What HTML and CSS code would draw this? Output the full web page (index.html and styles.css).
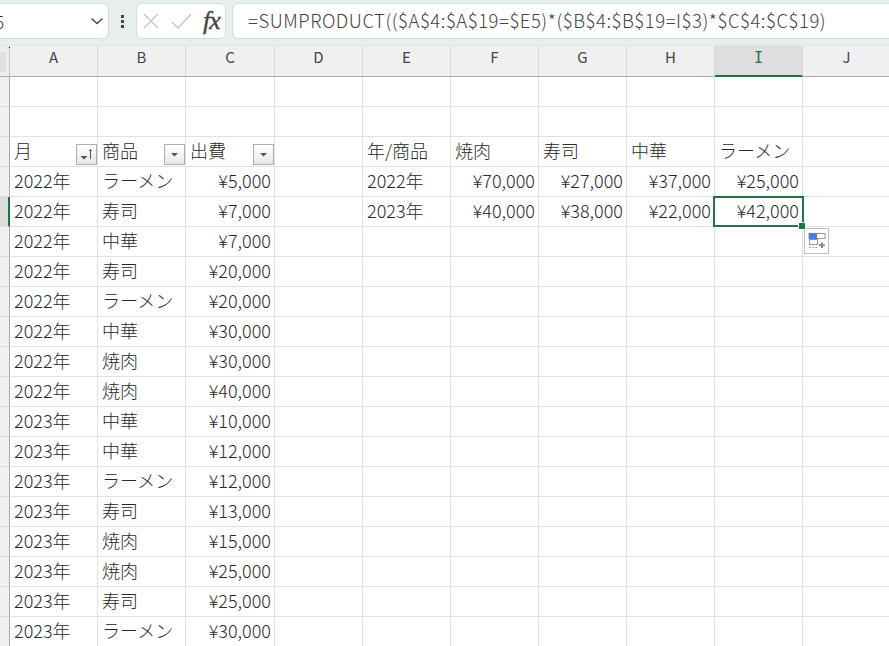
FILE: index.html
```html
<!DOCTYPE html>
<html lang="ja">
<head>
<meta charset="utf-8">
<title>Excel SUMPRODUCT</title>
<link rel="stylesheet" href="styles.css">
</head>
<body>
<div class="formula-bar">
  <div class="name-box"><span class="name-text">5</span>
    <svg class="chev" width="14" height="8" viewBox="0 0 14 8"><path d="M1.5 1.5 L7 6.5 L12.5 1.5" fill="none" stroke="#444" stroke-width="1.4"/></svg>
  </div>
  <div class="dots"><i></i><i></i><i></i></div>
  <div class="fx-box">
    <svg width="16" height="16" viewBox="0 0 16 16"><path d="M1 1 L15 15 M15 1 L1 15" fill="none" stroke="#c4c4c4" stroke-width="1.4"/></svg>
    <svg width="21" height="16" viewBox="0 0 21 16"><path d="M1 9 L7 15 L20 1" fill="none" stroke="#c4c4c4" stroke-width="1.4"/></svg>
    <span class="fx">fx</span>
  </div>
  <div class="formula">=SUMPRODUCT(($A$4:$A$19=$E5)*($B$4:$B$19=I$3)*$C$4:$C$19)</div>
</div>

<div class="sheet">
  <div class="row col-head">
    <div class="corner"></div>
    <div class="ch">A</div><div class="ch">B</div><div class="ch">C</div><div class="ch">D</div><div class="ch">E</div><div class="ch">F</div><div class="ch">G</div><div class="ch">H</div><div class="ch active">I</div><div class="ch">J</div>
  </div>
  <div class="row"><div class="rh"></div><div></div><div></div><div></div><div></div><div></div><div></div><div></div><div></div><div></div><div></div></div>
  <div class="row"><div class="rh"></div><div></div><div></div><div></div><div></div><div></div><div></div><div></div><div></div><div></div><div></div></div>
  <div class="row head-row"><div class="rh"></div>
    <div class="filter-cell">月<span class="fbtn"><svg width="17" height="17" viewBox="0 0 17 17"><path d="M2.5 10 H9.5 L6 13.5 Z" fill="#555"/><path d="M12.5 13 V3.5 M11.2 5 L12.5 3.5 L13.8 5" fill="none" stroke="#555"/></svg></span></div>
    <div class="filter-cell">商品<span class="fbtn"><svg width="17" height="17" viewBox="0 0 17 17"><path d="M5 7 H12 L8.5 10.5 Z" fill="#555"/></svg></span></div>
    <div class="filter-cell">出費<span class="fbtn"><svg width="17" height="17" viewBox="0 0 17 17"><path d="M5 7 H12 L8.5 10.5 Z" fill="#555"/></svg></span></div>
    <div></div><div>年/商品</div><div>焼肉</div><div>寿司</div><div>中華</div><div>ラーメン</div><div></div></div>
  <div class="row"><div class="rh"></div><div>2022年</div><div>ラーメン</div><div class="n">¥5,000</div><div></div><div>2022年</div><div class="n">¥70,000</div><div class="n">¥27,000</div><div class="n">¥37,000</div><div class="n">¥25,000</div><div></div></div>
  <div class="row"><div class="rh on"></div><div>2022年</div><div>寿司</div><div class="n">¥7,000</div><div></div><div>2023年</div><div class="n">¥40,000</div><div class="n">¥38,000</div><div class="n">¥22,000</div><div class="n sel">¥42,000<span class="handle"></span>
      <span class="paste"><svg width="22" height="20" viewBox="0 0 22 20"><rect x="3" y="2.5" width="16" height="5" fill="#fff" stroke="#999"/><rect x="3" y="2" width="8" height="6" fill="#4a7fe0"/><rect x="3.5" y="8.5" width="8" height="5" fill="#fff" stroke="#999"/><path d="M3.5 16.5 H11" stroke="#999" stroke-dasharray="1.5 1.5" fill="none"/><path d="M16 11.5 V17 M13.2 14.2 H18.8" stroke="#8a8a8a" stroke-width="2" fill="none"/></svg></span></div><div></div></div>
  <div class="row"><div class="rh"></div><div>2022年</div><div>中華</div><div class="n">¥7,000</div><div></div><div></div><div></div><div></div><div></div><div></div><div></div></div>
  <div class="row"><div class="rh"></div><div>2022年</div><div>寿司</div><div class="n">¥20,000</div><div></div><div></div><div></div><div></div><div></div><div></div><div></div></div>
  <div class="row"><div class="rh"></div><div>2022年</div><div>ラーメン</div><div class="n">¥20,000</div><div></div><div></div><div></div><div></div><div></div><div></div><div></div></div>
  <div class="row"><div class="rh"></div><div>2022年</div><div>中華</div><div class="n">¥30,000</div><div></div><div></div><div></div><div></div><div></div><div></div><div></div></div>
  <div class="row"><div class="rh"></div><div>2022年</div><div>焼肉</div><div class="n">¥30,000</div><div></div><div></div><div></div><div></div><div></div><div></div><div></div></div>
  <div class="row"><div class="rh"></div><div>2022年</div><div>焼肉</div><div class="n">¥40,000</div><div></div><div></div><div></div><div></div><div></div><div></div><div></div></div>
  <div class="row"><div class="rh"></div><div>2023年</div><div>中華</div><div class="n">¥10,000</div><div></div><div></div><div></div><div></div><div></div><div></div><div></div></div>
  <div class="row"><div class="rh"></div><div>2023年</div><div>中華</div><div class="n">¥12,000</div><div></div><div></div><div></div><div></div><div></div><div></div><div></div></div>
  <div class="row"><div class="rh"></div><div>2023年</div><div>ラーメン</div><div class="n">¥12,000</div><div></div><div></div><div></div><div></div><div></div><div></div><div></div></div>
  <div class="row"><div class="rh"></div><div>2023年</div><div>寿司</div><div class="n">¥13,000</div><div></div><div></div><div></div><div></div><div></div><div></div><div></div></div>
  <div class="row"><div class="rh"></div><div>2023年</div><div>焼肉</div><div class="n">¥15,000</div><div></div><div></div><div></div><div></div><div></div><div></div><div></div></div>
  <div class="row"><div class="rh"></div><div>2023年</div><div>焼肉</div><div class="n">¥25,000</div><div></div><div></div><div></div><div></div><div></div><div></div><div></div></div>
  <div class="row"><div class="rh"></div><div>2023年</div><div>寿司</div><div class="n">¥25,000</div><div></div><div></div><div></div><div></div><div></div><div></div><div></div></div>
  <div class="row"><div class="rh"></div><div>2023年</div><div>ラーメン</div><div class="n">¥30,000</div><div></div><div></div><div></div><div></div><div></div><div></div><div></div></div>
</div>
</body>
</html>
```
FILE: styles.css
```css
* { box-sizing: border-box; }
html, body { margin: 0; padding: 0; height: 100%; overflow: hidden; background: #fff; }
body { font-family: "Noto Sans CJK JP", sans-serif; font-weight: 300; color: #2a2a2a; font-size: 18px; }

.formula-bar {
  height: 46px;
  background: #e6efec;
  display: flex;
  align-items: flex-start;
  padding-top: 3px;
  border-bottom: 1px solid #dfe5e3;
}
.name-box, .fx-box, .formula {
  height: 36px;
  background: #fff;
  border: 1px solid #d5dcda;
  border-radius: 6px;
}
.name-box {
  width: 120px;
  margin-left: -11px;
  flex: none;
  display: flex;
  align-items: center;
  justify-content: space-between;
  padding-right: 4px;
  color: #333;
  font-size: 17px;
}
.name-text { margin-left: 5px; }
.dots { width: 27px; flex: none; display: flex; flex-direction: column; align-items: center; gap: 2px; padding-top: 12px; }
.dots i { width: 3px; height: 3px; background: #444; display: block; }
.fx-box {
  width: 90px;
  flex: none;
  display: flex;
  align-items: center;
  padding-left: 6px;
  gap: 12px;
}
.fx {
  font-family: "Liberation Serif", serif;
  font-style: italic;
  font-weight: 400;
  font-size: 26px;
  line-height: 1;
  letter-spacing: -1px;
  -webkit-text-stroke: 0.4px #444;
  color: #444;
  margin-left: -1px;
}
.formula {
  margin-left: 6px;
  flex: 1;
  border-radius: 6px 0 0 6px;
  border-right: 0;
  padding-left: 15px;
  font-size: 18.5px;
  letter-spacing: 0.52px;
  line-height: 33px;
  color: #444;
  white-space: nowrap;
  overflow: hidden;
}

.sheet { display: flex; flex-direction: column; }
.row {
  display: grid;
  grid-template-columns: 10px 88px 88px 89px 88px 88px 88px 88px 88px 88px 88px;
  height: 30px;
  flex: none;
}
.row > div {
  border-right: 1px solid #e1e1e1;
  border-bottom: 1px solid #e1e1e1;
  padding: 0 3px 0 4px;
  line-height: 27px;
  white-space: nowrap;
  position: relative;
}
.row > .n { text-align: right; }
.row > .rh { background: #f0f0f0; border-right: 1px solid #ababab; border-bottom: 1px solid #dcdcdc; padding: 0; }
.row > .rh.on { background: #dcdcdc; border-right: 2px solid #217346; }
.head-row > div { line-height: 26px; }

.col-head { height: 31px; }
.col-head > div {
  background: #f0f0f0;
  border-right: 1px solid #d8d8d8;
  border-bottom: 1px solid #ababab;
  text-align: center;
  font-size: 15px;
  font-weight: 400;
  line-height: 22px;
  color: #444;
  padding: 0;
}
.col-head > .corner { background: #eee; border-right: 1px solid #c8c8c8; }
.corner::before {
  content: "";
  position: absolute;
  left: 0;
  top: 6px;
  width: 6px;
  height: 20px;
  background: #e0e0e0;
}
.corner::after {
  content: "";
  position: absolute;
  right: -1px;
  top: 1px;
  width: 1px;
  height: 1px;
  background: #111;
}
.col-head > .active {
  background: #dedede;
  color: #217346;
  border-bottom: 2px solid #217346;
  font-family: "DejaVu Sans Mono", monospace;
  line-height: 24px;
}

.fbtn {
  position: absolute;
  right: 0;
  bottom: 1px;
  width: 21px;
  height: 21px;
  background: linear-gradient(#fff, #e8e8e8);
  border: 1px solid #adadad;
  display: flex;
  align-items: center;
  justify-content: center;
}

.row > .sel { z-index: 2; }
.sel::before {
  content: "";
  position: absolute;
  left: -2px; top: -1px; right: -2px; bottom: -1px;
  border: 2px solid #217346;
}
.handle {
  position: absolute;
  right: -3px;
  bottom: -3px;
  width: 6px;
  height: 6px;
  background: #217346;
  border: 1px solid #fff;
  box-sizing: content-box;
  margin: -1px;
  z-index: 3;
}
.paste {
  position: absolute;
  left: 89px;
  top: 31px;
  width: 25px;
  height: 26px;
  background: #fff;
  border: 1px solid #bdbdbd;
  display: flex;
  align-items: center;
  justify-content: center;
}
```
